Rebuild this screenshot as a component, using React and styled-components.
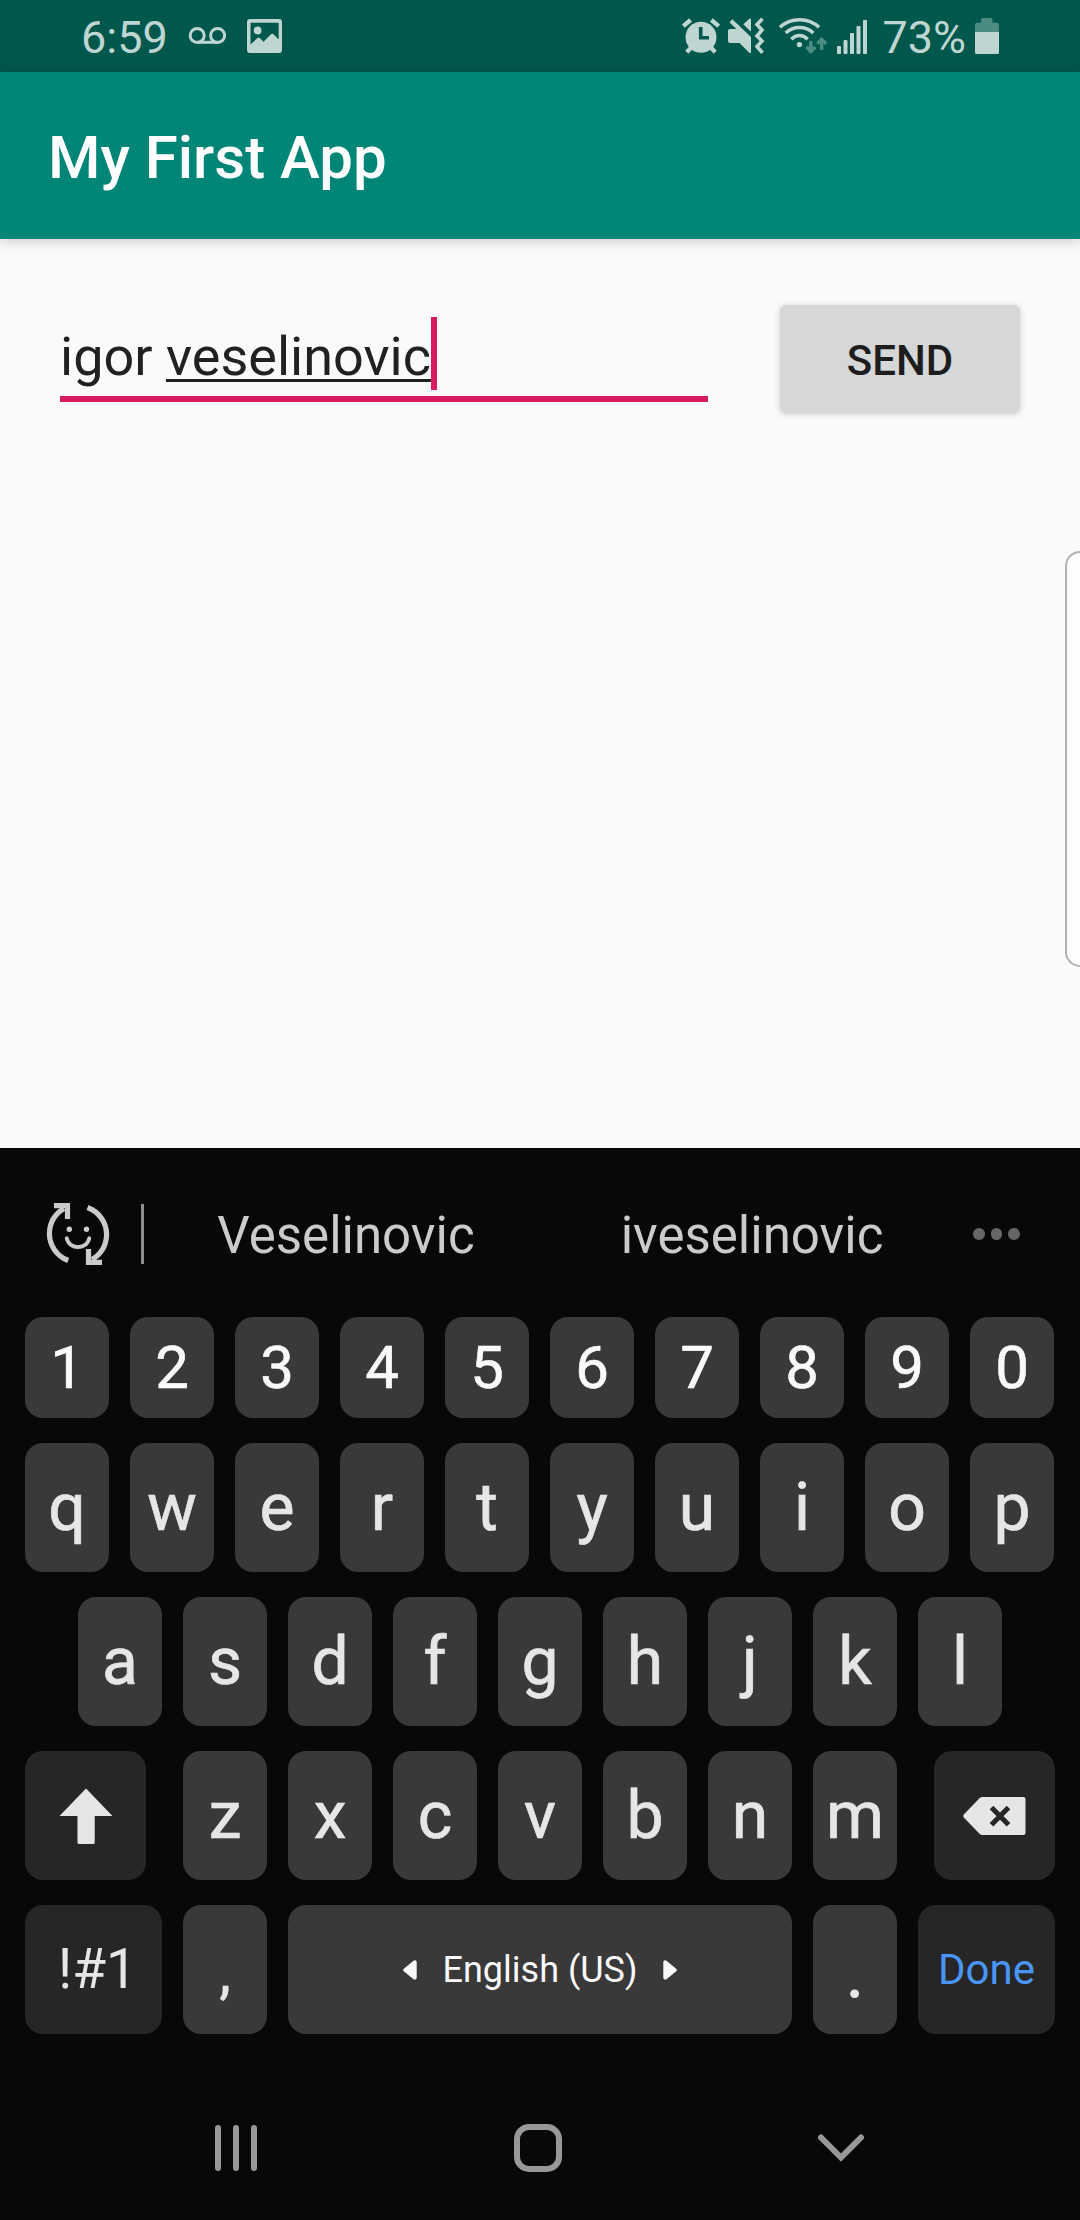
import React from "react";
import styled, { createGlobalStyle } from "styled-components";

const GlobalStyle = createGlobalStyle`
  * { box-sizing: border-box; }
  body { margin: 0; background: #fafafa; }
`;

const Screen = styled.div`
  position: relative;
  display: flex;
  flex-direction: column;
  width: 1080px;
  height: 2220px;
  overflow: hidden;
  background: #fafafa;
  font-family: Roboto, "Noto Sans", sans-serif;
`;

const StatusBar = styled.header`
  display: flex;
  justify-content: space-between;
  height: 72px;
  padding: 0 81px 0 81px;
  background: #00574b;
  color: #bfd5d2;
`;

const StatusGroup = styled.div`
  display: flex;
  height: 72px;
`;

const StatusText = styled.span`
  font-size: 45px;
  line-height: 72px;
  padding-top: 2px;
  white-space: nowrap;
`;

const StatusSvg = styled.svg`
  display: block;
  flex: none;
`;

const AppBar = styled.div`
  position: relative;
  display: flex;
  align-items: center;
  height: 168px;
  padding: 5px 48px 0;
  background: #008577;
  box-shadow: 0 2px 13px rgba(0, 0, 0, 0.19);
`;

const Title = styled.h1`
  margin: 0;
  color: #fff;
  font-size: 60px;
  font-weight: 500;
  line-height: 72px;
`;

const Content = styled.main`
  flex: none;
  height: 909px;
`;

const Form = styled.div`
  display: flex;
  justify-content: space-between;
  align-items: flex-start;
  padding: 66px 60px 0;
`;

const Field = styled.div`
  display: flex;
  width: 648px;
  height: 97px;
  padding-top: 12px;
  border-bottom: 6px solid #d81b60;
`;

const FieldText = styled.span`
  color: #212121;
  font-size: 54px;
  line-height: 73px;
  padding-top: 3px;
  white-space: pre;
`;

const Composing = styled.span`
  text-decoration: underline;
  text-decoration-thickness: 3px;
  text-decoration-skip-ink: none;
  text-underline-offset: 4px;
`;

const Caret = styled.i`
  width: 6px;
  height: 73px;
  background: #d81b60;
`;

const SendButton = styled.button`
  width: 240px;
  height: 108px;
  padding: 3px 0 0;
  border: 0;
  border-radius: 6px;
  background: #d6d7d7;
  box-shadow: 0 1px 6px rgba(0, 0, 0, 0.2);
  color: #1d1d1d;
  font: 500 42px/50px Roboto, sans-serif;
`;

const EdgePanel = styled.aside`
  position: absolute;
  top: 551px;
  right: 0;
  width: 15px;
  height: 416px;
  border: 2px solid #b1b1b1;
  border-right: 0;
  border-radius: 18px 0 0 18px;
  background: #fdfdfd;
`;

const Keyboard = styled.section`
  flex: 1;
  display: flex;
  flex-direction: column;
  background: #080808;
`;

const Suggestions = styled.div`
  display: flex;
  align-items: center;
  height: 169px;
  padding: 3px 60px 0 46px;
`;

const Divider = styled.i`
  width: 3px;
  height: 60px;
  margin-left: 31px;
  background: #8f8f8f;
`;

const Suggestion = styled.span`
  width: ${(p) => p.$w}px;
  padding-top: 3px;
  color: #cbcbcb;
  font-size: 51px;
  line-height: 60px;
  text-align: center;
`;

const More = styled.div`
  display: flex;
  gap: 6px;
  margin-left: auto;
`;

const Dot = styled.i`
  width: 11.6px;
  height: 11.6px;
  border-radius: 50%;
  background: #666;
`;

const Keys = styled.div`
  display: flex;
  flex-direction: column;
  gap: 25px;
`;

const Row = styled.div`
  display: flex;
  gap: 21px;
  height: ${(p) => p.$h || 129}px;
  padding-left: ${(p) => p.$indent || 25}px;
`;

const Key = styled.button`
  display: flex;
  align-items: center;
  justify-content: center;
  flex: none;
  width: ${(p) => p.$w || 84}px;
  height: 100%;
  margin: 0 ${(p) => p.$mr || 0}px 0 ${(p) => p.$ml || 0}px;
  padding: ${(p) => p.$drop || 0}px 0 0 ${(p) => p.$shift || 0}px;
  border: 0;
  border-radius: 18px;
  background: ${(p) => (p.$dark ? "#262626" : "#393939")};
  color: ${(p) => p.$color || "#e6e6e6"};
  font-family: Roboto, sans-serif;
  font-size: ${(p) => p.$size || 66}px;
  font-weight: 400;
  -webkit-text-stroke: ${(p) => p.$stroke || 0}px currentColor;
  line-height: 1;
  white-space: nowrap;
`;

const SpaceKey = styled(Key)`
  gap: 26px;
`;

const NavBar = styled.nav`
  display: flex;
  align-items: center;
  justify-content: space-between;
  height: 144px;
  margin-top: 42px;
  padding: 0 216px 0 215px;
`;

const Drawing = styled.svg`
  display: block;
`;

const VoicemailIcon = () => (
  <StatusSvg width="38" height="72" viewBox="188 0 38 72" fill="none" stroke="currentColor" strokeWidth="3">
    <circle cx="197.2" cy="35.4" r="7" />
    <circle cx="217.6" cy="35.4" r="7" />
    <path d="M197 42.3H218" />
  </StatusSvg>
);

const PhotoIcon = () => (
  <StatusSvg width="36" height="72" viewBox="247 0 36 72" fill="currentColor">
    <path
      fillRule="evenodd"
      d="M250 19h29a3 3 0 0 1 3 3v28a3 3 0 0 1-3 3h-29a3 3 0 0 1-3-3V22a3 3 0 0 1 3-3zM250.500 22.800V44.500L257.500 38Q258.600 37.200 259.700 38L263.500 41.800L271 34.200Q272.300 33.200 273.500 34.200L278.700 39.500V22.800z"
    />
    <circle cx="257.600" cy="30.500" r="3.900" />
  </StatusSvg>
);

const AlarmIcon = () => (
  <StatusSvg width="40" height="72" viewBox="681 0 40 72" fill="currentColor">
    <circle cx="701" cy="37.300" r="15.500" />
    <path d="M683.300 26.200L690.600 20M711.400 20L718.700 26.200" stroke="currentColor" strokeWidth="4.300" />
    <path d="M686.800 52.200L692 46.500M715.200 52.200L710 46.500" stroke="currentColor" strokeWidth="4.300" />
    <path d="M700.700 27V37.700H709" fill="none" stroke="#00574b" strokeWidth="3.600" />
  </StatusSvg>
);

const MuteVibrateIcon = () => (
  <StatusSvg width="38" height="72" viewBox="727 0 38 72" fill="currentColor">
    <path d="M732.300 19.300L751 37V52.500Q750.800 53.600 749.600 53L739.500 43H730Q728 43 728 41V31Q728 29 730 29H736.300L729.500 22.200z" />
    <path d="M743.300 24.300L749.600 18.600Q750.700 18 751 19.200V31.800z" />
    <path d="M762.500 18.800L757 24.500L762 30L757 36L762 41L757 46.500L762.500 52.800" fill="none" stroke="currentColor" strokeWidth="3.600" />
  </StatusSvg>
);

const WifiIcon = () => (
  <StatusSvg width="50" height="72" viewBox="778 0 50 72" fill="none" stroke="currentColor" strokeWidth="3.500">
    <path d="M780 27.300Q788 19.700 799.500 19.700T819 27.300" />
    <path d="M785.700 33Q791.500 27.500 799.500 27.500T813.300 33" />
    <path d="M791.300 39.300Q795 35.500 799.500 35.500T807.700 39.300" />
    <circle cx="799.400" cy="44.600" r="2.700" fill="currentColor" stroke="none" />
    <g stroke="#4b8b82" strokeWidth="3.400">
      <path d="M810.800 41V52M806.500 47L810.800 51.500L815.200 47" />
      <path d="M821.700 50V39M817.300 43.800L821.700 39.300L826.100 43.800" />
    </g>
  </StatusSvg>
);

const SignalIcon = () => (
  <StatusSvg width="34" height="72" viewBox="836 0 34 72" fill="currentColor">
    <rect x="837" y="46" width="4" height="8" rx="1" />
    <rect x="843.500" y="40" width="4" height="14" rx="1" />
    <rect x="850" y="33" width="4" height="21" rx="1" />
    <rect x="856.500" y="26" width="4" height="28" rx="1" />
    <rect x="863" y="20" width="4" height="34" rx="1" />
  </StatusSvg>
);

const BatteryIcon = () => (
  <StatusSvg width="24" height="72" viewBox="975 0 24 72">
    <path d="M975 32V24.700Q975 22.700 977 22.700H981V19.500Q981 18 982.500 18H991Q992.500 18 992.500 19.500V22.700H997Q999 22.700 999 24.700V32z" fill="#4b8b82" />
    <path d="M975 32H999V52.500Q999 54 997.500 54H976.500Q975 54 975 52.500z" fill="currentColor" />
  </StatusSvg>
);

const Spacer = styled.i`
  flex: none;
  width: ${(p) => p.$w}px;
`;

const StickerIcon = () => (
  <Drawing width="64" height="64" viewBox="46 1203 64 64" fill="none" stroke="#cbcbcb" strokeWidth="5.200">
    <path d="M68.200 1261.500A29 29 0 0 1 49.400 1234.500Q49.800 1218 64 1209.500" />
    <path d="M54 1206.600H67.500V1220" />
    <path d="M61 1205H70V1214z" fill="#cbcbcb" stroke="none" />
    <path d="M87.500 1208.500A29 29 0 0 1 106.600 1235.500Q106.200 1252 92 1260.500" />
    <path d="M102 1263.400H88.500V1250" />
    <path d="M95 1265H86V1256z" fill="#cbcbcb" stroke="none" />
    <circle cx="69.300" cy="1230.300" r="2.700" fill="#cbcbcb" stroke="none" />
    <circle cx="86.500" cy="1230.300" r="2.700" fill="#cbcbcb" stroke="none" />
    <path d="M66.700 1239.300C69.500 1251 86.500 1251 89.300 1239.300" strokeWidth="3.800" strokeLinecap="round" />
  </Drawing>
);

const ShiftIcon = () => (
  <Drawing width="54" height="56" viewBox="0 0 54 56" fill="#e6e6e6">
    <path d="M27 .5L53.500 28H35.700V54.500Q35.700 56 34.200 56H20Q18.500 56 18.500 54.500V28H.5z" />
  </Drawing>
);

const BackspaceIcon = () => (
  <Drawing width="63" height="38" viewBox="0 0 63 38">
    <path d="M18.500 0H60.500Q62.500 0 62.500 2V36Q62.500 38 60.500 38H18.500L16.500 36.800L.8 20.500Q-.2 19 .8 17.500L16.500 1.200z" fill="#e6e6e6" />
    <path d="M28.500 10.500L45.500 27.700M45.500 10.500L28.500 27.700" stroke="#262626" strokeWidth="5" />
  </Drawing>
);

const LeftArrow = () => (
  <Drawing width="14" height="20" viewBox="0 0 14 20" fill="#fafafa">
    <path d="M10.500.8Q13.500-.6 13.700 2.500V17.500Q13.500 20.600 10.500 19.200L.8 11.300Q-.4 10 .8 8.700z" />
  </Drawing>
);

const RightArrow = () => (
  <Drawing width="14" height="20" viewBox="0 0 14 20" fill="#fafafa">
    <path d="M3.500.8Q.5-.6.3 2.500V17.500Q.5 20.600 3.500 19.200L13.200 11.300Q14.400 10 13.200 8.700z" />
  </Drawing>
);

const letters = (text) =>
  text.split("").map((c) => (
    <Key key={c} $stroke={0.7}>
      {c}
    </Key>
  ));

export default function App() {
  return (
    <Screen>
      <GlobalStyle />
      <StatusBar>
        <StatusGroup>
          <StatusText>6:59</StatusText>
          <Spacer $w={20} />
          <VoicemailIcon />
          <Spacer $w={21} />
          <PhotoIcon />
        </StatusGroup>
        <StatusGroup>
          <AlarmIcon />
          <Spacer $w={6} />
          <MuteVibrateIcon />
          <Spacer $w={13} />
          <WifiIcon />
          <Spacer $w={8} />
          <SignalIcon />
          <Spacer $w={12} />
          <StatusText>73%</StatusText>
          <Spacer $w={9} />
          <BatteryIcon />
        </StatusGroup>
      </StatusBar>
      <AppBar>
        <Title>My First App</Title>
      </AppBar>
      <Content>
        <Form>
          <Field>
            <FieldText>
              igor <Composing>veselinovic</Composing>
            </FieldText>
            <Caret />
          </Field>
          <SendButton>SEND</SendButton>
        </Form>
      </Content>
      <EdgePanel />
      <Keyboard>
        <Suggestions>
          <StickerIcon />
          <Divider />
          <Suggestion $w={404}>Veselinovic</Suggestion>
          <Suggestion $w={408}>iveselinovic</Suggestion>
          <More>
            <Dot />
            <Dot />
            <Dot />
          </More>
        </Suggestions>
        <Keys>
          <Row $h={101}>
            {"1234567890".split("").map((c) => (
              <Key key={c} $size={60} $stroke={0.6} $color="#fafafa">
                {c}
              </Key>
            ))}
          </Row>
          <Row>{letters("qwertyuiop")}</Row>
          <Row $indent={78}>{letters("asdfghjkl")}</Row>
          <Row>
            <Key $w={121} $mr={16} $dark>
              <ShiftIcon />
            </Key>
            {letters("zxcvbnm")}
            <Key $w={121} $ml={16} $dark>
              <BackspaceIcon />
            </Key>
          </Row>
          <Row>
            <Key $w={137} $size={55} $shift={8} $dark>
              !#1
            </Key>
            <Key $size={59} $drop={4} $stroke={0.4}>,</Key>
            <SpaceKey $w={504} $size={36} $color="#fafafa">
              <LeftArrow />
              <span>English (US)</span>
              <RightArrow />
            </SpaceKey>
            <Key $size={78} $drop={4}>.</Key>
            <Key $w={137} $size={42} $color="#4996f8" $dark>
              Done
            </Key>
          </Row>
        </Keys>
        <NavBar>
          <Drawing width="42" height="46" viewBox="0 0 42 46" fill="#989898">
            <rect width="6" height="46" rx="3" />
            <rect x="18" width="6" height="46" rx="3" />
            <rect x="36" width="6" height="46" rx="3" />
          </Drawing>
          <Drawing width="48" height="48" viewBox="0 0 48 48" fill="none" stroke="#989898" strokeWidth="6">
            <rect x="3" y="3" width="42" height="42" rx="12" />
          </Drawing>
          <Drawing width="46" height="28" viewBox="0 0 46 28" fill="none" stroke="#989898" strokeWidth="6" strokeLinecap="round">
            <path d="M3 3.500L23 23.500L43 3.500" />
          </Drawing>
        </NavBar>
      </Keyboard>
    </Screen>
  );
}
